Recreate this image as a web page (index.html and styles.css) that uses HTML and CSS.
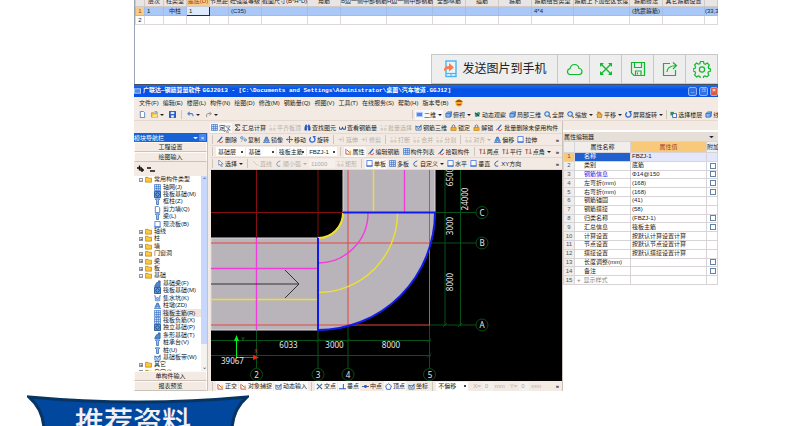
FILE: index.html
```html
<!DOCTYPE html>
<html lang="zh-CN">
<head>
<meta charset="utf-8">
<title>广联达钢筋算量软件</title>
<link rel="stylesheet" href="styles.css">
</head>
<body>
<svg class="defs" aria-hidden="true">
<symbol id="page" viewBox="0 0 8 8"><path d="M1.500.5h3.500l1.500 1.500v5.500h-5z" fill="#fff" stroke="#5577bb"/></symbol>
<symbol id="open" viewBox="0 0 8 8"><path d="M.5 2h3l1 1h3v4h-7z" fill="#f7c13b" stroke="#b07a10" stroke-width=".7"/><path d="M1 7l2-3h5L6.500 7z" fill="#ffe08a"/><path d="M4 1h3v1" stroke="#37a" fill="none"/></symbol>
<symbol id="save" viewBox="0 0 8 8"><path d="M.5.5h7v7h-7z" fill="#2f62c8" stroke="#244a9a"/><path d="M2 1h4v2.500H2z" fill="#dfe9ff"/><path d="M2.500 5h3v2.500h-3z" fill="#fff"/></symbol>
<symbol id="undo" viewBox="0 0 8 8"><path d="M3 1L1 3l2 2M1 3h4q2 0 2 3" fill="none" stroke="#4d7fd8" stroke-width="1.200"/></symbol>
<symbol id="redo" viewBox="0 0 8 8"><path d="M5 1l2 2-2 2M7 3H3Q1 3 2 7" fill="none" stroke="#888"/></symbol>
<symbol id="grid" viewBox="0 0 8 8"><path d="M.5.5h7v7h-7zM.5 3h7M.5 5.300h7M3 .5v7M5.300.5v7" fill="#d9e8ff" stroke="#3c74c8" stroke-width=".8"/></symbol>
<symbol id="screen" viewBox="0 0 8 8"><rect x=".5" y="1.500" width="7" height="5" fill="#5087e8" stroke="#bdd1f8"/></symbol>
<symbol id="view" viewBox="0 0 8 8"><path d="M1 3l2-2h5v4L6 7H1z" fill="#8bb9f5" stroke="#225caa" stroke-width=".8"/><path d="M1 3h5l2-2M6 3v4" fill="none" stroke="#225caa" stroke-width=".8"/></symbol>
<symbol id="orbit" viewBox="0 0 8 8"><ellipse cx="4" cy="4" rx="3.500" ry="2" fill="#38a565" transform="rotate(-40 4 4)"/><path d="M1 2l5 4" stroke="#163d8a" stroke-width="1.200"/></symbol>
<symbol id="lens" viewBox="0 0 8 8"><circle cx="3.500" cy="3.500" r="2.600" fill="#d9ecff" stroke="#2e6fc9" stroke-width="1.200"/><path d="M5.500 5.500L8 8" stroke="#b76a18" stroke-width="1.500"/></symbol>
<symbol id="hand" viewBox="0 0 8 8"><path d="M1 4l1-1V1h1v2l1-2 1 1v2l1-1 1 1-1 4H2z" fill="#f4b04c" stroke="#8a5510" stroke-width=".6"/></symbol>
<symbol id="turn" viewBox="0 0 8 8"><path d="M2.300 1.500A3 3 0 1 0 6 2" fill="none" stroke="#2869d8" stroke-width="1.500"/><path d="M4 0h4L6 3.500z" fill="#2869d8"/></symbol>
<symbol id="swap" viewBox="0 0 8 8"><path d="M.5 1h4v4h-4z" fill="#2c8f65"/><path d="M3 3h4.500v4.500H3z" fill="#fff" stroke="#245fae"/></symbol>
<symbol id="sigma" viewBox="0 0 8 8"><path d="M6.500 2V1H1.500l2.800 3-2.800 3h5V6" fill="none" stroke="#222" stroke-width="1.100"/></symbol>
<symbol id="find" viewBox="0 0 8 8"><path d="M1 7V4l1-3h1v6zM5 7V1h1l1 3v3zM3 3h2" fill="#2452bf" stroke="#2452bf" stroke-width=".8"/></symbol>
<symbol id="glasses" viewBox="0 0 8 8"><path d="M0 3l1 3h2l1-2 1 2h2l1-4" fill="none" stroke="#235a9f" stroke-width="1.200"/></symbol>
<symbol id="lock" viewBox="0 0 8 8"><path d="M2.500 4V2q1.500-2 3 0v2" fill="none" stroke="#666"/><path d="M1 4h6v3.500H1z" fill="#f4af29" stroke="#a56c0b" stroke-width=".6"/></symbol>
<symbol id="pencil" viewBox="0 0 8 8"><path d="M2 6l4-5" stroke="#2e65c4" stroke-width="1.500"/><path d="M0 7q2-2 3 0t4-1" fill="none" stroke="#c8402a"/></symbol>
<symbol id="copy" viewBox="0 0 8 8"><circle cx="2" cy="2" r="1.300" fill="none" stroke="#367bc9"/><circle cx="6" cy="4.500" r="1.300" fill="none" stroke="#367bc9"/><path d="M1 7l4-6" stroke="#999" stroke-width=".7"/></symbol>
<symbol id="mirror" viewBox="0 0 8 8"><path d="M1 6l2.500-5v5zM7 6L4.500 1v5zM0 7.500h8" fill="#8cbcf0" stroke="#245eaf" stroke-width=".8"/></symbol>
<symbol id="move" viewBox="0 0 8 8"><path d="M4 0v8M0 4h8M3 1.500L4 .5l1 1M3 6.500l1 1 1-1M1.500 3l-1 1 1 1M6.500 3l1 1-1 1" fill="none" stroke="#2869bd"/></symbol>
<symbol id="edge" viewBox="0 0 8 8"><path d="M.5 4H5M6 1v6M3 2v4" stroke="currentColor" fill="none"/></symbol>
<symbol id="parallel" viewBox="0 0 8 8"><path d="M2 1v6M6 1v6" stroke="#b4473c" fill="none"/><path d="M0 2h4M4 6h4" stroke="#4a76ba" stroke-width=".7"/></symbol>
<symbol id="parts" viewBox="0 0 8 8"><path d="M.5 2h2m3 0h2M1 5v2h2V5zM5 5v2h2V5z" fill="none" stroke="currentColor"/></symbol>
<symbol id="wire" viewBox="0 0 8 8"><path d="M1 7V2l3 4 3-5v6zM1 3h6" fill="none" stroke="#346ca8" stroke-width=".9"/></symbol>
<symbol id="line" viewBox="0 0 8 8"><path d="M1 1l5 5h1.500" fill="none" stroke="currentColor"/></symbol>
<symbol id="arc" viewBox="0 0 8 8"><path d="M6 1Q0 3 3 7h3" fill="none" stroke="#345fb2" stroke-width="1.100"/></symbol>
<symbol id="pointer" viewBox="0 0 8 8"><path d="M2 0v6l1.500-1.200L5 8l1-.6L4.800 4.500H7z" fill="#fff" stroke="#3a66ac" stroke-width=".7"/></symbol>
<symbol id="box" viewBox="0 0 8 8"><path d="M1 .5h6v7H1z" fill="#fff" stroke="#386fdb" stroke-width=".9"/><path d="M.5 6.500h7" stroke="#386fdb"/></symbol>
<symbol id="cross" viewBox="0 0 8 8"><path d="M1 1l6 6M7 1L1 7" stroke="#2c66b8" stroke-width="1.200"/></symbol>
<symbol id="pent" viewBox="0 0 8 8"><path d="M4 .8L7.300 3.300 6 7.300H2L.7 3.300z" fill="none" stroke="#2c66c8"/></symbol>
<symbol id="perp" viewBox="0 0 8 8"><path d="M0 6.500h8M5 1v5" fill="none" stroke="#2c66c8" stroke-width="1.200"/></symbol>
<symbol id="dot" viewBox="0 0 8 8"><path d="M0 4h8" stroke="#456"/><circle cx="4" cy="4" r="1.700" fill="#1e52c4"/></symbol>
<symbol id="snap" viewBox="0 0 8 8"><path d="M1 1v6h6M2 2l4 4" stroke="#c0513b" fill="none"/><path d="M5 3h2v3H5z" fill="#f1b543"/></symbol>
<symbol id="folder" viewBox="0 0 8 8"><path d="M.5 1.500h3l.7 1h3.300v4.500h-7z" fill="#ffc83c" stroke="#a87408" stroke-width=".7"/></symbol>
<symbol id="pile" viewBox="0 0 8 8"><path d="M1.500 1h5L5 3v4.500H3V3z" fill="#b7d6fa" stroke="#1f5ba8" stroke-width=".9"/></symbol>
<symbol id="base" viewBox="0 0 8 8"><path d="M.7 7.300L3 3h2V1h2v6.300z" fill="#4c8ddb" stroke="#174c92" stroke-width=".8"/></symbol>
<symbol id="slab" viewBox="0 0 8 8"><path d="M.5.5h7v7h-7z" fill="#6ba2df" stroke="#1a4e93"/><circle cx="4" cy="4" r="2" fill="none" stroke="#103e7c"/></symbol>
<symbol id="pit" viewBox="0 0 8 8"><path d="M0 1h1.500v5.500h5V1H8M3 3h2v2H3z" fill="none" stroke="#3776c1" stroke-width=".9"/></symbol>
</svg>

<main class="content">
<section class="sheet">
<table class="columns">
<colgroup><col class="c-no"><col class="c-s"><col class="c-m"><col class="c-m"><col class="c-s"><col class="c-l"><col class="c-xl"><col class="c-l"><col class="c-xl"><col class="c-xl"><col class="c-l"><col class="c-l"><col class="c-l"><col class="c-w"><col class="c-xw"><col class="c-l"><col class="c-w"><col></colgroup>
<thead><tr><th></th><th>层次</th><th>柱类型</th><th class="hot">是底(D)</th><th>节点距</th><th>砼强度等级</th><th>截面尺寸(B*H*D)</th><th>角筋</th><th>B边一侧中部钢筋</th><th>H边一侧中部钢筋</th><th>全部纵筋</th><th>插筋</th><th>箍筋</th><th>箍筋组合类型</th><th>箍筋上下加密区长度</th><th>箍筋肢法</th><th>其它箍筋设置</th><th></th></tr></thead>
<tbody><tr class="on"><td class="hot">1</td><td class="l">1</td><td>中柱</td><td class="edit l">1</td><td></td><td class="l">(C35)</td><td></td><td></td><td></td><td></td><td></td><td></td><td></td><td class="l">4*4</td><td></td><td>(抗震箍筋)</td><td></td><td>(33,3</td></tr>
<tr><td>2</td><td></td><td></td><td></td><td></td><td></td><td></td><td></td><td></td><td></td><td></td><td></td><td></td><td></td><td></td><td></td><td></td><td></td></tr></tbody>
</table>
</section>

<div class="share">
<button class="send" type="button"><svg viewBox="0 0 16 18"><rect x="4" y="1" width="10" height="15.500" fill="#e4f5ff" stroke="#4ab3ee" stroke-width="1.400"/><path d="M4 13.500h10" stroke="#4ab3ee"/><path d="M8 15h2" stroke="#4ab3ee"/><path d="M2 11q-.5-5 5-5V3l5 4.500L7 11.500V9q-3 0-5 2z" fill="#ff7a45"/></svg>发送图片到手机</button>
<button type="button" aria-label="云"><svg viewBox="0 0 18 18"><path d="M4.500 14.500h9.500a3 3 0 0 0 0-6q-.6-4-4.500-4-3.500 0-4.500 4.200a3 3 0 0 0-.5 5.800z"/></svg></button>
<button type="button" aria-label="全屏"><svg viewBox="0 0 18 18"><path d="M4 4l10 10M14 4L4 14" stroke-width="1.400"/><path d="M3 3h4L3 7zM15 3v4l-4-4zM15 15h-4l4-4zM3 15v-4l4 4z" fill="#0fbb2c" stroke="none"/></svg></button>
<button type="button" aria-label="保存"><svg viewBox="0 0 18 18"><path d="M2.500 2.500h13v13H5l-2.500-2.500zM5.500 2.500v5h7v-5M6.500 15.500v-4.500h5.500v4.500M8.500 12.500v2"/></svg></button>
<button type="button" aria-label="分享"><svg viewBox="0 0 18 18"><path d="M9 3.500H2.500v12h12V10M6 12q0-6 9-6.500M12 2.500l3.500 3L12 9"/></svg></button>
<button type="button" aria-label="设置"><svg viewBox="0 0 18 18"><path d="M7.500 1.500h3l.5 2.200 1.300.6 2-1.200 2 2-1.100 2 .5 1.300 1.800.6v2l-2 .7-.6 1.300 1 2-2 1.900-2-1-1.200.5-.6 2.100h-2.600l-.6-2.100-1.300-.5-2 1-2-2 1-1.900-.5-1.300-2-.7V8.900l2-.6.500-1.300-1-2 2-1.900 2 1.100 1.200-.5z"/><circle cx="9" cy="9.500" r="2.600"/></svg></button>
</div>

<section class="app">
<header class="title"><svg><use href="#screen"/></svg><span>广联达—钢筋算量软件</span><span>GGJ2013 - [C:\Documents and Settings\Administrator\桌面\汽车坡道.GGJ12]</span><span class="winbtns"><button type="button" aria-label="最小化">_</button><button type="button" aria-label="还原">❐</button><button class="close" type="button" aria-label="关闭">×</button></span></header>
<nav class="menu"><button>文件(F)</button><button>编辑(E)</button><button>楼层(L)</button><button>构件(N)</button><button>绘图(D)</button><button>修改(M)</button><button>钢筋量(Q)</button><button>视图(V)</button><button>工具(T)</button><button>在线服务(S)</button><button>帮助(H)</button><button>版本号(B)</button><svg viewBox="0 0 8 8"><circle cx="4" cy="4" r="3.500" fill="#f5b321"/><path d="M0 3q4-5 8 0z" fill="#9c5511"/><path d="M2 5q2 2 4 0" stroke="#a22" fill="none"/></svg></nav>
<div class="bar views">
<div class="files"><button aria-label="新建"><svg><use href="#page"/></svg></button><button class="drop" aria-label="打开"><svg><use href="#open"/></svg></button><button aria-label="保存"><svg><use href="#save"/></svg></button><i class="sep"></i><button class="drop" aria-label="撤销"><svg><use href="#undo"/></svg></button><button class="drop" aria-label="恢复"><svg><use href="#redo"/></svg></button></div>
<i class="sep"></i><button class="drop on"><svg><use href="#screen"/></svg>二维</button><button class="drop"><svg><use href="#view"/></svg>俯视</button><button><svg><use href="#orbit"/></svg>动态观察</button><button><svg><use href="#view"/></svg>局部三维</button><button><svg><use href="#lens"/></svg>全屏</button><button class="drop"><svg><use href="#lens"/></svg>缩放</button><button class="drop"><svg><use href="#hand"/></svg>平移</button><button class="drop"><svg><use href="#turn"/></svg>屏幕旋转</button><i class="sep"></i><button><svg><use href="#swap"/></svg>选择楼层</button><button><svg><use href="#view"/></svg>线框</button>
</div>
<div class="work">
<aside class="side">
<h2 class="nav-title">模块导航栏<span>⏷</span><button aria-label="关闭">×</button></h2>
<button class="tab">工程设置</button><button class="tab">绘图输入</button>
<div class="tools"><svg viewBox="0 0 20 8"><path d="M1 3h5M3.500.5v5M4 5h4M6 3v4M11 3h4M14 6h5" stroke="#111" stroke-width="1.400"/></svg></div>
<div class="treebox"><ul class="tree">
<li class="f"><b>-</b><svg><use href="#folder"/></svg>常用构件类型</li>
<li><svg><use href="#grid"/></svg>轴网(J)</li><li><svg><use href="#slab"/></svg>筏板基础(M)</li><li><svg><use href="#pile"/></svg>框柱(Z)</li><li><svg><use href="#page"/></svg>剪力墙(Q)</li><li><svg><use href="#pile"/></svg>梁(L)</li><li><svg><use href="#box"/></svg>现浇板(B)</li>
<li class="f"><b>+</b><svg><use href="#folder"/></svg>轴线</li><li class="f"><b>+</b><svg><use href="#folder"/></svg>柱</li><li class="f"><b>+</b><svg><use href="#folder"/></svg>墙</li><li class="f"><b>+</b><svg><use href="#folder"/></svg>门窗洞</li><li class="f"><b>+</b><svg><use href="#folder"/></svg>梁</li><li class="f"><b>+</b><svg><use href="#folder"/></svg>板</li><li class="f"><b>-</b><svg><use href="#folder"/></svg>基础</li>
<li><svg><use href="#base"/></svg>基础梁(F)</li><li><svg><use href="#slab"/></svg>筏板基础(M)</li><li><svg><use href="#pit"/></svg>集水坑(K)</li><li><svg><use href="#mirror"/></svg>柱墩(ZD)</li><li class="sel"><svg><use href="#grid"/></svg>筏板主筋(R)</li><li><svg><use href="#grid"/></svg>筏板负筋(X)</li><li><svg><use href="#slab"/></svg>独立基础(P)</li><li><svg><use href="#base"/></svg>条形基础(T)</li><li><svg><use href="#pile"/></svg>桩承台(V)</li><li><svg><use href="#pile"/></svg>桩(U)</li><li><svg><use href="#wire"/></svg>基础板带(W)</li>
<li class="f"><b>+</b><svg><use href="#folder"/></svg>其它</li><li class="f"><b>+</b><svg><use href="#folder"/></svg>自定义</li>
</ul><div class="scroll"><span>⌃</span><span>⌄</span></div></div>
<button class="tab">单构件输入</button><button class="tab">报表预览</button>
</aside>

<section class="center">
<div class="bar"><button class="on"><svg><use href="#grid"/></svg>定义</button><button><svg><use href="#sigma"/></svg>汇总计算</button><button disabled><svg><use href="#parts"/></svg>平齐板顶</button><button><svg><use href="#find"/></svg>查找图元</button><button><svg><use href="#glasses"/></svg>查看钢筋量</button><button disabled><svg><use href="#parts"/></svg>批量选择</button><button><svg><use href="#wire"/></svg>钢筋三维</button><button><svg><use href="#lock"/></svg>锁定</button><button><svg><use href="#lock"/></svg>解锁</button><button><svg><use href="#pencil"/></svg>批量删除未使用构件</button><svg class="cursor" viewBox="0 0 8 12"><path d="M1 0v9l2-2 2 4 1.500-1L5 6.500h3z" fill="#fff" stroke="#555" stroke-width=".8"/></svg></div>
<div class="bar"><i class="sep"></i><button><svg><use href="#pencil"/></svg>删除</button><button><svg><use href="#copy"/></svg>复制</button><button><svg><use href="#mirror"/></svg>镜像</button><button><svg><use href="#move"/></svg>移动</button><button><svg><use href="#turn"/></svg>旋转</button><i class="sep"></i><button disabled><svg><use href="#edge"/></svg>延伸</button><button disabled><svg><use href="#edge"/></svg>修剪</button><i class="sep"></i><button disabled><svg><use href="#parts"/></svg>打断</button><button disabled><svg><use href="#parts"/></svg>合并</button><button disabled><svg><use href="#parts"/></svg>分割</button><i class="sep"></i><button class="drop" disabled><svg><use href="#parts"/></svg>对齐</button><button><svg><use href="#mirror"/></svg>偏移</button><button><svg><use href="#box"/></svg>拉伸</button><span class="more">»</span></div>
<div class="bar"><i class="sep"></i><select aria-label="楼层"><option>基础层</option></select><select aria-label="构件类别"><option>基础</option></select><select aria-label="构件类型"><option>筏板主筋</option></select><select aria-label="构件名称"><option>FBZJ-1</option></select><i class="sep"></i><button class="on"><svg><use href="#snap"/></svg>属性</button><button><svg><use href="#pencil"/></svg>编辑钢筋</button><button><svg><use href="#grid"/></svg>构件列表</button><button><svg><use href="#pencil"/></svg>拾取构件</button><i class="sep"></i><button><svg><use href="#parallel"/></svg>两点</button><button><svg><use href="#parallel"/></svg>平行</button><button class="drop"><svg><use href="#parallel"/></svg>点角</button><span class="more">»</span></div>
<div class="bar"><i class="sep"></i><button class="drop"><svg><use href="#pointer"/></svg>选择</button><i class="sep"></i><button disabled><svg><use href="#line"/></svg>直线</button><button class="drop" disabled><svg><use href="#arc"/></svg>顺小弧</button><input aria-label="半径" value="11000" disabled><button disabled><svg><use href="#parts"/></svg>矩形</button><i class="sep"></i><button class="on"><svg><use href="#box"/></svg>单板</button><button><svg><use href="#grid"/></svg>多板</button><button class="drop"><svg><use href="#arc"/></svg>自定义</button><button><svg><use href="#box"/></svg>水平</button><button><svg><use href="#box"/></svg>垂直</button><button><svg><use href="#arc"/></svg>XY方向</button><span class="more">»</span></div>
<svg class="drawing" viewBox="210 170 352 211" preserveAspectRatio="xMidYMid slice">
<path d="M211 170h351v211H211z"/>
<g class="green"><path d="M256.500 330v38M318 330v38M348 325v43M429.500 325v43M211 340.500h220M211 355.500h220M445 169v157M460.500 169v157M435 212.500h41M430 243h46M430 325h46M443 327l4-4M458 327l4-4M346 342.500l4-4M427 342.500l4-4M427 357.500l4-4M316 342.500l4-4"/><circle cx="482" cy="212.500" r="6"/><circle cx="482" cy="243" r="6"/><circle cx="482" cy="325" r="6"/><circle cx="256.500" cy="374.500" r="6"/><circle cx="318" cy="374.500" r="6"/><circle cx="348" cy="374.500" r="6"/><circle cx="429.500" cy="374.500" r="6"/></g>
<path class="road" d="M211 238H318A25 26 0 0 0 343 212V169H435V212A117 118 0 0 1 318 330H211z"/>
<path class="dark" d="M256.500 170v68M318 170v68M211 212.500h132"/>
<path class="red" d="M348 170v155M429.500 170v155M211 243h219M211 325h219"/>
<path class="yellow" d="M373.500 170v42M397.500 213A79.500 79.500 0 0 1 318 292.500M211 299.500h107"/>
<path class="pink" d="M404.500 170v42M368 213A50 50 0 0 1 318 263M211 268.500h107M256.500 238v92"/>
<path class="yellow wide" d="M343 213A25 25 0 0 1 318 238"/>
<path class="blue" d="M318 238v92A117 118 0 0 0 435 212.500H343"/>
<path class="arrow" d="M211 284h88M285 270l14 14-14 14"/>
<path d="M236.500 358v-19" stroke="#00ef20" stroke-width="2"/><path d="M234 341l2.500-6 2.500 6z" fill="#00ef20"/><path d="M236 357.500h19" stroke="#f21" stroke-width="2"/><path d="M253 355l6 2.500-6 2.500z" fill="#f21"/>
<g class="labels"><text x="288.500" y="348">6033</text><text x="334.500" y="348">3000</text><text x="391" y="348">8000</text><text x="232.500" y="364">39067</text><text x="482" y="215.500">C</text><text x="482" y="246">B</text><text x="482" y="328">A</text><text x="256.500" y="377.500">2</text><text x="318" y="377.500">3</text><text x="348" y="377.500">4</text><text x="430" y="377.500">5</text><text transform="translate(453 177) rotate(-90)">6500</text><text transform="translate(468 199) rotate(-90)">24000</text><text transform="translate(453 226) rotate(-90)">3000</text><text transform="translate(453 282) rotate(-90)">8000</text><text class="ay" x="243" y="341">Y</text><text class="ax" x="256" y="353">X</text></g>
</svg>
<div class="bar status"><i class="sep"></i><button class="on"><svg><use href="#snap"/></svg>正交</button><button class="on"><svg><use href="#snap"/></svg>对象捕捉</button><button class="on"><svg><use href="#wire"/></svg>动态输入</button><i class="sep"></i><button class="on"><svg><use href="#cross"/></svg>交点</button><button class="on"><svg><use href="#perp"/></svg>垂点</button><button><svg><use href="#dot"/></svg>中点</button><button class="on"><svg><use href="#pent"/></svg>顶点</button><button><svg><use href="#wire"/></svg>坐标</button><i class="sep"></i><select aria-label="偏移方式"><option>不偏移</option></select><label class="off">X= <input value="0" disabled> mm</label><label class="off">Y= <input value="0" disabled> mm</label><span class="more">»</span></div>
</section>

<aside class="props">
<h2>属性编辑器<span>⏷</span></h2>
<table>
<colgroup><col class="p-no"><col class="p-name"><col class="p-val"><col></colgroup>
<thead><tr><th></th><th>属性名称</th><th class="hot">属性值</th><th>附加</th></tr></thead>
<tbody>
<tr class="cur"><th>1</th><td>名称</td><td>FBZJ-1</td><td></td></tr>
<tr><th>2</th><td>类别</td><td>底筋</td><td><input type="checkbox" aria-label="类别"></td></tr>
<tr><th>3</th><td class="key">钢筋信息</td><td>Φ14@150</td><td><input type="checkbox" aria-label="钢筋信息"></td></tr>
<tr><th>4</th><td>左弯折(mm)</td><td>(168)</td><td><input type="checkbox" aria-label="左弯折"></td></tr>
<tr><th>5</th><td>右弯折(mm)</td><td>(168)</td><td><input type="checkbox" aria-label="右弯折"></td></tr>
<tr><th>6</th><td>钢筋锚固</td><td>(41)</td><td></td></tr>
<tr><th>7</th><td>钢筋搭接</td><td>(58)</td><td></td></tr>
<tr><th>8</th><td>归类名称</td><td>(FBZJ-1)</td><td><input type="checkbox" aria-label="归类名称"></td></tr>
<tr><th>9</th><td>汇总信息</td><td>筏板主筋</td><td><input type="checkbox" aria-label="汇总信息"></td></tr>
<tr><th>10</th><td>计算设置</td><td>按默认计算设置计算</td><td></td></tr>
<tr><th>11</th><td>节点设置</td><td>按默认节点设置计算</td><td></td></tr>
<tr><th>12</th><td>搭接设置</td><td>按默认搭接设置计算</td><td></td></tr>
<tr><th>13</th><td>长度调整(mm)</td><td></td><td><input type="checkbox" aria-label="长度调整"></td></tr>
<tr><th>14</th><td>备注</td><td></td><td><input type="checkbox" aria-label="备注"></td></tr>
<tr class="fold"><th>15</th><td><b>+</b>显示样式</td><td></td><td></td></tr>
</tbody></table>
</aside>
</div>
</section>
</main>

<section class="banner"><svg viewBox="0 0 222 64" aria-hidden="true"><path d="M2 2Q111 12 220 2 206 14 205 34V62H17V34Q16 14 2 2z" fill="#00479d" stroke="#073563" stroke-width="3"/></svg><h1>推荐资料</h1></section>
</body>
</html>
```
FILE: styles.css
```css
* { box-sizing: border-box; }
body {
  display: flex;
  flex-direction: column;
  margin: 0;
  height: 100vh;
  overflow: hidden;
  background: #fff;
  color: #222;
  font: 6px/8px "Liberation Sans", "Noto Sans CJK SC", sans-serif;
}
.defs { position: absolute; width: 0; height: 0; }
.content { flex: none; margin: 0 73px 0 134px; }
h1, h2, ul { margin: 0; padding: 0; font-weight: normal; }
button, select, input { font: inherit; color: inherit; margin: 0; padding: 0; border: 0; background: none; border-radius: 0; }
button { white-space: nowrap; }
table { border-collapse: collapse; table-layout: fixed; width: 100%; }
th, td { padding: 0; font-weight: normal; white-space: nowrap; }

/* column sheet */
.sheet { height: 84px; overflow: hidden; border-left: 1px solid #9aa3b5; }
.columns { margin-top: -4px; text-align: center; }
.columns tr { height: 9px; }
.columns thead tr { height: 10px; }
.columns th { background: #e9e5e4; border: 1px solid #cfcac8; border-top: 0; }
.columns td { border: 1px solid #dcd8dc; }
.columns .on td { background: #a9c8f8; border-color: #a0bdea; }
.columns .hot, .columns .on .hot { background: #f6cd86; color: #a33c1c; }
.columns .l { text-align: left; padding-left: 2px; }
.columns .on .edit { background: #dce9ff; border: 1px solid #1d2c50; }
.c-no { width: 9px; }
.c-s { width: 19px; }
.c-m { width: 23px; }
.c-l { width: 33px; }
.c-xl { width: 46px; }
.c-w { width: 42px; }
.c-xw { width: 56px; }

/* share strip */
.share { position: relative; display: flex; width: 287px; height: 30px; margin: -30px 0 0 auto; background: #eee; border: 1px solid #c8c8c8; }
.share button { flex: 1; display: flex; align-items: center; justify-content: center; border-left: 1px solid #c8c8c8; }
.share svg { width: 18px; height: 18px; fill: none; stroke: #0fbb2c; stroke-width: 1.2; }
.share .send { flex: 0 0 125px; gap: 4px; border-left: 0; font-size: 12px; line-height: 16px; color: #222; }
.share .send svg { width: 16px; stroke: none; }

/* application window */
.app { background: #f3ebe3; height: 307px; overflow: hidden; display: flex; flex-direction: column; }
.title { display: flex; align-items: center; gap: 2px; height: 13px; flex: none; border-top: 1px solid #46505c; background: linear-gradient(#1c6df2, #0450e4 40%, #0553e8); color: #fff; font-family: "Liberation Mono", "Noto Sans CJK SC", monospace; font-weight: bold; white-space: pre; }
.title svg { width: 7px; height: 8px; }
.winbtns { margin-left: auto; display: flex; gap: 2px; overflow: hidden; }
.winbtns button { width: 9px; height: 9px; border: 1px solid #8fb4f8; border-radius: 2px; background: #326ee6; line-height: 6px; }
.winbtns .close { background: #e35a3a; width: 8px; }
.menu { display: flex; align-items: center; gap: 4px; height: 12px; padding-left: 5px; flex: none; }
.menu svg { width: 8px; height: 8px; margin-left: 3px; }
.bar { position: relative; display: flex; align-items: center; gap: 1px; height: 12px; flex: none; overflow: hidden; border-bottom: 1px solid #e3d9d0; white-space: nowrap; }
.bar button { display: flex; flex: none; align-items: center; gap: 1px; height: 10px; padding: 0 1px; }
.bar button svg { width: 7px; height: 7px; flex: none; }
.bar button:disabled, .off { color: #b5aea8; }
.bar button:disabled svg { opacity: .6; }
.bar .on { background: #fbf9f7; }
.bar .drop::after { content: ""; margin-left: 1px; border: 2px solid transparent; border-top-color: currentColor; border-bottom: 0; }
.sep { flex: none; width: 1px; height: 9px; margin: 0 2px; background: #cfc5bc; }
.views .sep { margin: 0 1px; }
.files { display: flex; align-items: center; gap: 3px; flex: 0 0 276px; padding-left: 4px; }
.bar select { appearance: none; width: 32px; height: 9px; padding-left: 2px; background: #fff linear-gradient(#444, #444) no-repeat right 2px center / 2px 2px; }
.bar input { width: 26px; height: 9px; padding-left: 2px; background: #f5f0eb; color: #aaa; }
.off { display: flex; align-items: center; gap: 2px; padding-left: 4px; }
.bar .off input { width: 10px; }
.more { margin-left: auto; padding: 0 3px; font-weight: bold; }
.cursor { position: absolute; left: 13px; top: 3px; width: 7px; height: 9px; }

.work { display: grid; grid-template-columns: 74px 1fr 156px; flex: 1; min-height: 0; }
.side { display: flex; flex-direction: column; margin-top: 12px; min-height: 0; border-right: 1px solid #c9c2bc; }
.nav-title { display: flex; align-items: center; flex: none; height: 9px; font-size: 6px; color: #fff; background: #1862d6; }
.nav-title span { margin-left: auto; }
.nav-title button { width: 7px; height: 7px; margin: 0 1px; background: #4a86ee; line-height: 6px; }
.tab { height: 10px; flex: none; border: 1px solid #fffaf6; border-bottom-color: #cdc2b9; }
.tools { height: 14px; padding: 3px 2px; flex: none; }
.tools svg { display: block; width: 20px; height: 8px; }
.treebox { display: flex; flex: 1; min-height: 0; overflow: hidden; background: #fff; }
.tree { flex: 1; display: grid; grid-auto-rows: 1fr; height: 200px; list-style: none; }
.tree li { display: flex; align-items: center; gap: 2px; min-height: 0; padding-left: 20px; white-space: nowrap; line-height: 7px; }
.tree .f { padding-left: 5px; }
.tree svg { width: 7px; height: 7px; flex: none; }
.tree b { width: 4px; height: 4px; border: 1px solid #8a96a8; font-size: 4px; line-height: 2px; text-align: center; }
.tree .sel { background: linear-gradient(#eee6dc, #eee6dc) no-repeat 28px 0; }
.scroll { width: 6px; flex: none; display: flex; flex-direction: column; justify-content: space-between; background: linear-gradient(#c8d8fc 86%, #f3f2ee 86%); color: #245; text-align: center; }

.center { display: flex; flex-direction: column; min-width: 0; padding: 1px 0 0 2px; }
.drawing { display: block; flex: 1; width: 100%; min-height: 0; }
.drawing path { stroke-width: 1; }
.green { fill: none; stroke: #075018; }
.road { fill: #b9b4ba; stroke: #dcd8df; }
.dark, .red, .yellow, .pink, .blue, .arrow { fill: none; }
.dark { stroke: #850e10; }
.red { stroke: #e8453e; }
.drawing .yellow { stroke: #eee02e; stroke-width: 1.4; }
.drawing .wide { stroke-width: 2; }
.drawing .pink { stroke: #f23bdf; stroke-width: 1.4; }
.drawing .blue { stroke: #101bea; stroke-width: 2; }
.arrow { stroke: #333; }
.labels { fill: #e8e8e8; font: 8px "Noto Sans", sans-serif; text-anchor: middle; }
.ay { fill: #0a9020; font-size: 6px; }
.ax { fill: #e22; font-size: 6px; }
.status { height: 10px; border: 0; }

.props { background: #fff; overflow: hidden; border-left: 1px solid #c9c2bc; }
.props h2 { display: flex; justify-content: space-between; height: 9px; margin-top: 11px; font-size: 6px; background: #e6dfd7; padding: 1px 4px 0 1px; box-shadow: 0 -11px #f3ebe3; }
.props table { height: 144px; }
.props thead tr { height: 11px; }
.props tr { height: 8px; line-height: 7px; }
.props th, .props td { border: 1px solid #d8d3d6; }
.props tbody th, .props thead th { background: #f1edea; text-align: center; }
.props tbody th { color: #555; }
.props thead .hot { background: #f8c978; color: #a3402a; }
.props td:nth-child(2) { padding-left: 9px; }
.props td:nth-child(3) { padding-left: 1px; }
.props .cur td { background: #e4e6fb; }
.props .cur td:nth-child(2) { background: #2161cf; color: #fff; }
.props .cur th { background: #f8c978; }
.props .key { color: #2428dd; }
.props .fold td { color: #8a8a8a; }
.props .fold td:nth-child(2) { padding-left: 2px; }
.props .fold b { margin-right: 3px; }
.p-no { width: 11px; }
.p-name { width: 56px; }
.p-val { width: 76px; }
.props input { appearance: none; display: block; width: 6px; height: 6px; margin: 0 0 0 3px; border: 1px solid #6283a8; background: #fff; }

.banner { position: relative; flex: 1; min-height: 0; overflow: hidden; width: 222px; margin: 4px 0 0 27px; }
.banner svg { display: block; width: 100%; }
.banner h1 { position: absolute; inset: 10px 0 auto; padding-right: 10px; text-align: center; font-size: 29px; line-height: 36px; font-weight: 500; color: #f2eff5; }
```
